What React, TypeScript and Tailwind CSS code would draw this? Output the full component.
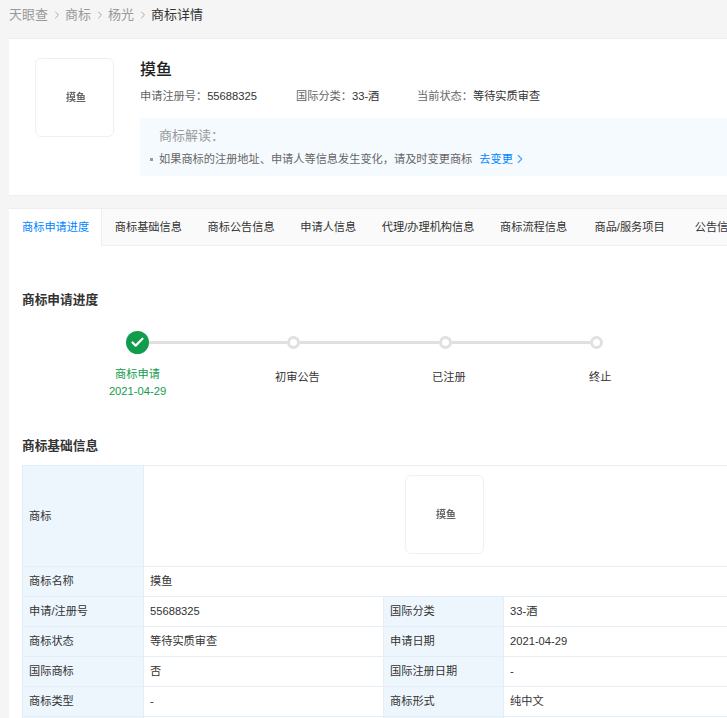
import { ChevronRight, Check } from "lucide-react";

const font = { fontFamily: '"Liberation Sans", "Noto Sans CJK SC", sans-serif' };

const tabs = ["商标基础信息", "商标公告信息", "申请人信息", "代理/办理机构信息", "商标流程信息"];

const LogoBox = () => (
  <div className="w-[79px] h-[79px] shrink-0 flex items-center justify-center rounded-md border border-[#f0f0f0] bg-white">
    <span className="ml-[3px] text-[10px] font-bold text-[#666] blur-[0.5px]">摸鱼</span>
  </div>
);

const Label = ({ children }: { children: React.ReactNode }) => (
  <td className="border border-[#e5eef6] bg-[#eef6fd] pl-[6px] text-[11.2px] text-[#333]">{children}</td>
);

const Value = ({ children, span }: { children: React.ReactNode; span?: number }) => (
  <td colSpan={span} className="border border-[#e5eef6] pl-[6px] text-[11.2px] text-[#333]">{children}</td>
);

const Dot = () => (
  <div className="w-[13px] h-[13px] shrink-0 rounded-full border-[3px] border-[#e0e0e0] bg-white" />
);

const Line = ({ w }: { w: string }) => <div className={`h-[3px] bg-[#e0e0e0] ${w}`} />;

export default function App() {
  return (
    <div style={font} className="h-[718px] w-[727px] overflow-hidden bg-[#f5f5f5]">
      <div className="w-[1200px] pl-[9px]">
        {/* breadcrumb */}
        <div className="h-[38px] pb-[8px] flex items-center text-[13px] text-[#999]">
          <span>天眼查</span>
          <ChevronRight className="w-3 h-3 mx-[2.5px] text-[#aaa]" />
          <span>商标</span>
          <ChevronRight className="w-3 h-3 mx-[2.5px] text-[#aaa]" />
          <span>杨光</span>
          <ChevronRight className="w-3 h-3 mx-[2.5px] text-[#aaa]" />
          <span className="text-[#333]">商标详情</span>
        </div>

        {/* header card */}
        <div className="h-[158px] bg-white border-t border-b border-[#eeeeee] pl-[26px] pt-[19px] flex">
          <LogoBox />
          <div className="ml-[26px] flex-1">
            <div className="text-[16px] leading-[24px] font-medium text-[#222]">摸鱼</div>
            <div className="mt-[4px] flex text-[11.2px] leading-[20px] text-[#666]">
              <span className="w-[156px]">申请注册号：<span className="text-[#333]">55688325</span></span>
              <span className="w-[121px]">国际分类：<span className="text-[#333]">33-酒</span></span>
              <span>当前状态：<span className="text-[#333]">等待实质审查</span></span>
            </div>
            <div className="mt-[12px] h-[58px] bg-[#f5faff] pl-[10px] pt-[9px]">
              <div className="pl-[9px] text-[13px] leading-[18px] text-[#999]">商标解读：</div>
              <div className="mt-[5px] flex items-center text-[11.2px] leading-[18px] text-[#666]">
                <span className="w-[3px] h-[3px] bg-[#999] mr-[6px]" />
                <span>如果商标的注册地址、申请人等信息发生变化，请及时变更商标</span>
                <span className="ml-[7px] text-[#0084ff]">去变更</span>
                <ChevronRight className="w-[14px] h-[14px] text-[#0084ff] opacity-70" />
              </div>
            </div>
          </div>
        </div>

        {/* tabs */}
        <div className="mt-[12px] h-[38px] flex bg-[#fafafa] border-t border-b border-[#eeeeee] text-[11.2px] text-[#333]">
          <div className="h-[37px] w-[93px] pl-[13px] flex items-center bg-white border-r border-[#eeeeee] text-[#0084ff]">商标申请进度</div>
          {tabs.map((t) => (
            <div key={t} className="px-[12.8px] flex items-center whitespace-nowrap">{t}</div>
          ))}
          <div className="ml-[1.5px] px-[13px] flex items-center whitespace-nowrap">商品/服务项目</div>
          <div className="ml-[4px] px-[13px] flex items-center whitespace-nowrap">公告信息</div>
        </div>

        {/* content */}
        <div className="bg-white pl-[13px] h-[480px]">
          <div className="pt-[45px] text-[12.7px] leading-[18px] font-bold text-[#333]">商标申请进度</div>

          {/* stepper */}
          <div className="mt-[22px] ml-[104px] flex items-center">
            <div className="w-[23px] h-[23px] shrink-0 rounded-full bg-[#0f9d4c] flex items-center justify-center">
              <Check className="w-[15px] h-[15px] text-white" strokeWidth={3.5} />
            </div>
            <Line w="w-[138px]" />
            <Dot />
            <Line w="w-[139px]" />
            <Dot />
            <Line w="w-[138px]" />
            <Dot />
          </div>
          <div className="mt-[12px] flex items-start text-[11.2px] leading-[17px] text-[#333]">
            <div className="w-[231px] shrink-0 text-[#0f9d4c] flex flex-col items-center">
              <span>商标申请</span>
              <span>2021-04-29</span>
            </div>
            <div className="ml-[22px] mt-[3px] w-[157px] shrink-0">初审公告</div>
            <div className="mt-[3px] w-[157px] shrink-0">已注册</div>
            <div className="mt-[3px]">终止</div>
          </div>

          <div className="mt-[37px] text-[12.7px] leading-[18px] font-bold text-[#333]">商标基础信息</div>

          <table className="mt-[10px] border-collapse table-fixed w-[1150px]">
            <colgroup>
              <col className="w-[121px]" />
              <col className="w-[240px]" />
              <col className="w-[120px]" />
              <col />
            </colgroup>
            <tbody>
              <tr className="h-[101px]">
                <Label>商标</Label>
                <Value span={3}>
                  <div className="ml-[255px] mb-[3px]">
                    <LogoBox />
                  </div>
                </Value>
              </tr>
              <tr className="h-[30px]">
                <Label>商标名称</Label>
                <Value span={3}>摸鱼</Value>
              </tr>
              <tr className="h-[30px]">
                <Label>申请/注册号</Label>
                <Value>55688325</Value>
                <Label>国际分类</Label>
                <Value>33-酒</Value>
              </tr>
              <tr className="h-[30px]">
                <Label>商标状态</Label>
                <Value>等待实质审查</Value>
                <Label>申请日期</Label>
                <Value>2021-04-29</Value>
              </tr>
              <tr className="h-[30px]">
                <Label>国际商标</Label>
                <Value>否</Value>
                <Label>国际注册日期</Label>
                <Value>-</Value>
              </tr>
              <tr className="h-[30px]">
                <Label>商标类型</Label>
                <Value>-</Value>
                <Label>商标形式</Label>
                <Value>纯中文</Value>
              </tr>
              <tr className="h-[30px]">
                <Label>&nbsp;</Label>
                <Value>&nbsp;</Value>
                <Label>&nbsp;</Label>
                <Value>&nbsp;</Value>
              </tr>
            </tbody>
          </table>
        </div>
      </div>
    </div>
  );
}
